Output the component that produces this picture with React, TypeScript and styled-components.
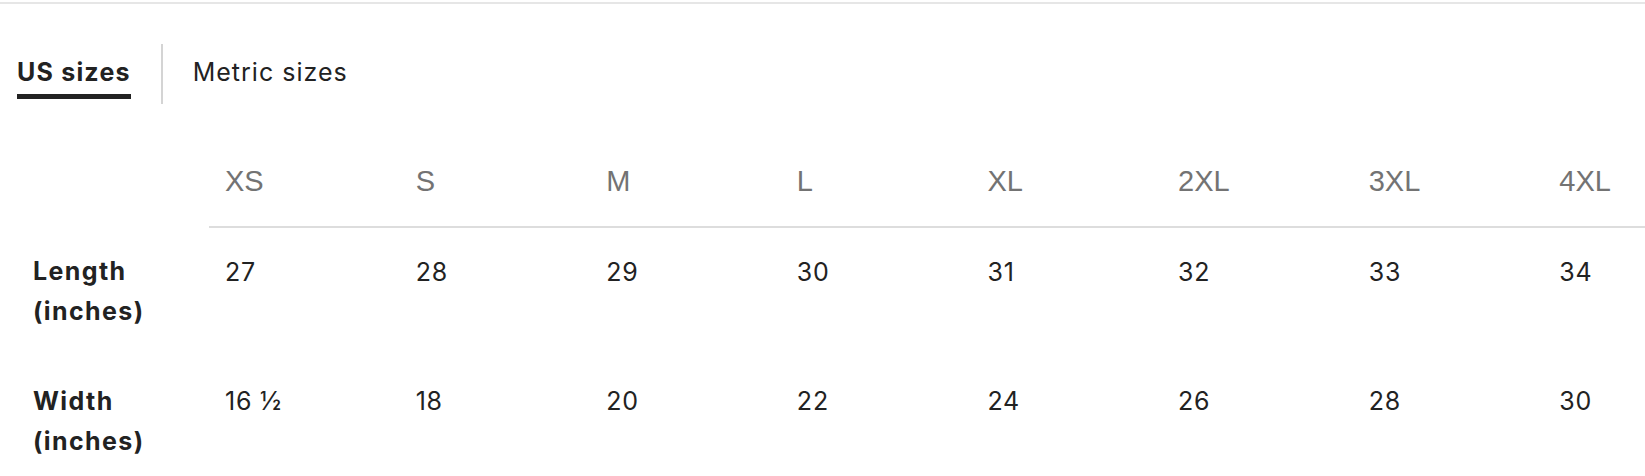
import React from "react";
import styled, { createGlobalStyle } from "styled-components";

const GlobalStyle = createGlobalStyle`
  html, body {
    margin: 0;
    padding: 0;
    background: #fff;
  }
  body {
    font-family: Inter, "Open Sans", Arial, sans-serif;
    color: #222;
    overflow: hidden;
  }
`;

const Wrapper = styled.div`
  width: 1645px;
  overflow: hidden;
  padding-top: 2px;
`;

const TopRule = styled.div`
  height: 2px;
  background-color: #e6e6e6;
`;

const TabBar = styled.div`
  display: flex;
  align-items: flex-start;
  margin: 40px 0 0 17px;
`;

type TabProps = {
  active?: boolean;
};

const Tab = styled.button<TabProps>`
  display: block;
  padding: 13px 0 7px;
  margin: 0;
  background: none;
  border: none;
  border-bottom: 5px solid ${(props: TabProps) => (props.active ? "#222" : "transparent")};
  font-family: Inter, "Open Sans", Arial, sans-serif;
  font-size: 25px;
  line-height: 30px;
  font-weight: ${(props: TabProps) => (props.active ? 700 : 400)};
  letter-spacing: ${(props: TabProps) => (props.active ? "1.2px" : "1px")};
  color: #222;
  cursor: pointer;
`;

const TabDivider = styled.div`
  width: 2px;
  height: 60px;
  margin: 0 30px;
  background-color: #d4d4d4;
`;

const SizeTable = styled.table`
  margin: 60px 0 0 17px;
  border-collapse: collapse;
  table-layout: fixed;
  width: 1717px;
`;

const LabelCol = styled.col`
  width: 192px;
`;

const SizeCol = styled.col`
  width: 190.6px;
`;

const CornerCell = styled.th`
  padding: 0;
`;

const SizeHeader = styled.th`
  padding: 0 16px 28px;
  text-align: left;
  font-family: "Liberation Sans", Arial, sans-serif;
  font-size: 29px;
  line-height: 34px;
  font-weight: 400;
  color: #737373;
  border-bottom: 2px solid #dddddd;
`;

const RowLabel = styled.th`
  padding: 24px 16px 26px;
  text-align: left;
  vertical-align: top;
  font-size: 25px;
  line-height: 40px;
  font-weight: 700;
  letter-spacing: 1.4px;
  color: #222;
`;

const ValueCell = styled.td`
  padding: 24px 16px 26px;
  vertical-align: top;
  font-size: 25px;
  line-height: 40px;
  letter-spacing: 0.8px;
  color: #222;
`;

const sizes = ["XS", "S", "M", "L", "XL", "2XL", "3XL", "4XL"];

const rows = [
  { label: "Length", unit: "(inches)", values: ["27", "28", "29", "30", "31", "32", "33", "34"] },
  { label: "Width", unit: "(inches)", values: ["16 \u00bd", "18", "20", "22", "24", "26", "28", "30"] },
];

export default function App() {
  const [unit, setUnit] = React.useState<"us" | "metric">("us");
  return (
    <Wrapper>
      <GlobalStyle />
      <TopRule />
      <TabBar>
        <Tab active={unit === "us"} onClick={() => setUnit("us")}>
          US sizes
        </Tab>
        <TabDivider />
        <Tab active={unit === "metric"} onClick={() => setUnit("metric")}>
          Metric sizes
        </Tab>
      </TabBar>
      <SizeTable>
        <colgroup>
          <LabelCol />
          {sizes.map((s) => (
            <SizeCol key={s} />
          ))}
        </colgroup>
        <thead>
          <tr>
            <CornerCell />
            {sizes.map((s) => (
              <SizeHeader key={s}>{s}</SizeHeader>
            ))}
          </tr>
        </thead>
        <tbody>
          {rows.map((row) => (
            <tr key={row.label}>
              <RowLabel>
                {row.label}
                <br />
                {row.unit}
              </RowLabel>
              {row.values.map((v, i) => (
                <ValueCell key={sizes[i]}>{v}</ValueCell>
              ))}
            </tr>
          ))}
        </tbody>
      </SizeTable>
    </Wrapper>
  );
}
